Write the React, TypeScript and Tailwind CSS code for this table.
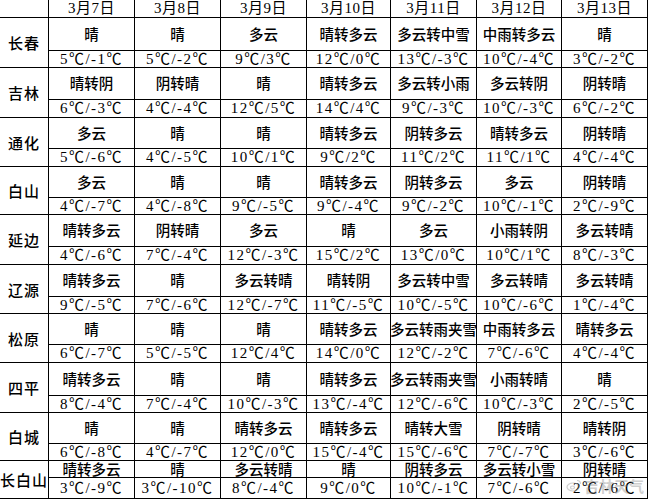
import React from "react"

const dates = ["3月7日", "3月8日", "3月9日", "3月10日", "3月11日", "3月12日", "3月13日"]

const cols = ["w-[49px]", "w-[86px]", "w-[86px]", "w-[86px]", "w-[84px]", "w-[86px]", "w-[85px]", "w-[86px]"]

const cities = [
  {
    name: "长春",
    wh: "h-[33px]",
    th: "h-[16px]",
    weather: ["晴", "晴", "多云", "晴转多云", "多云转中雪", "中雨转多云", "晴"],
    temp: ["5℃/-1℃", "5℃/-2℃", "9℃/3℃", "12℃/0℃", "13℃/-3℃", "10℃/-4℃", "3℃/-2℃"],
  },
  {
    name: "吉林",
    wh: "h-[32px]",
    th: "h-[17px]",
    weather: ["晴转阴", "阴转晴", "晴", "晴转多云", "多云转小雨", "多云转阴", "阴转晴"],
    temp: ["6℃/-3℃", "4℃/-4℃", "12℃/5℃", "14℃/4℃", "9℃/-3℃", "10℃/-3℃", "6℃/-2℃"],
  },
  {
    name: "通化",
    wh: "h-[31px]",
    th: "h-[17px]",
    weather: ["多云", "晴", "晴", "晴转多云", "阴转多云", "晴转多云", "阴转晴"],
    temp: ["5℃/-6℃", "4℃/-5℃", "10℃/1℃", "9℃/2℃", "11℃/2℃", "11℃/1℃", "4℃/-4℃"],
  },
  {
    name: "白山",
    wh: "h-[31px]",
    th: "h-[16px]",
    weather: ["多云", "晴", "晴", "晴转多云", "阴转多云", "多云", "阴转晴"],
    temp: ["4℃/-7℃", "4℃/-8℃", "9℃/-5℃", "9℃/-4℃", "9℃/-2℃", "10℃/-1℃", "2℃/-9℃"],
  },
  {
    name: "延边",
    wh: "h-[32px]",
    th: "h-[17px]",
    weather: ["晴转多云", "阴转晴", "多云", "晴", "多云", "小雨转阴", "多云转晴"],
    temp: ["4℃/-6℃", "7℃/-4℃", "12℃/-3℃", "15℃/2℃", "13℃/0℃", "10℃/1℃", "8℃/-3℃"],
  },
  {
    name: "辽源",
    wh: "h-[32px]",
    th: "h-[16px]",
    weather: ["晴转多云", "晴", "多云转晴", "晴转阴", "多云转中雪", "多云转晴", "多云转晴"],
    temp: ["9℃/-5℃", "7℃/-6℃", "12℃/-7℃", "11℃/-5℃", "10℃/-5℃", "10℃/-6℃", "1℃/-4℃"],
  },
  {
    name: "松原",
    wh: "h-[31px]",
    th: "h-[17px]",
    weather: ["晴", "晴", "晴", "晴转多云", "多云转雨夹雪", "中雨转多云", "晴转多云"],
    temp: ["6℃/-7℃", "5℃/-5℃", "12℃/4℃", "14℃/0℃", "12℃/-2℃", "7℃/-6℃", "4℃/-4℃"],
  },
  {
    name: "四平",
    wh: "h-[33px]",
    th: "h-[16px]",
    weather: ["晴转多云", "晴", "晴", "晴转多云", "多云转雨夹雪", "小雨转晴", "晴"],
    temp: ["8℃/-4℃", "7℃/-4℃", "10℃/-3℃", "13℃/-4℃", "12℃/-6℃", "10℃/-3℃", "2℃/-5℃"],
  },
  {
    name: "白城",
    wh: "h-[31px]",
    th: "h-[16px]",
    weather: ["晴", "晴", "晴转多云", "晴转多云", "晴转大雪", "阴转晴", "晴转阴"],
    temp: ["6℃/-8℃", "4℃/-7℃", "12℃/0℃", "15℃/-4℃", "15℃/-6℃", "7℃/-7℃", "3℃/-6℃"],
  },
  {
    name: "长白山",
    wh: "h-[17px]",
    th: "h-[20px]",
    weather: ["晴转多云", "晴", "多云转晴", "晴", "阴转多云", "多云转小雪", "阴转晴"],
    temp: ["3℃/-9℃", "3℃/-10℃", "8℃/-4℃", "9℃/0℃", "10℃/-1℃", "7℃/-6℃", "2℃/-6℃"],
  },
]

const cjk = "font-['Noto_Sans_CJK_SC',sans-serif]"
const serif = "font-['Liberation_Serif','Noto_Sans_CJK_SC',serif]"

export default function App() {
  return (
    <div className="relative w-[648px] h-[500px] overflow-hidden bg-white text-black">
      {/* header */}
      <div className="flex h-[18px] border-b border-black">
        {cols.map((w, i) => (
          <div
            key={i}
            className={`${w} shrink-0 border-r border-black flex items-center justify-center text-[15px] leading-none tracking-[0.5px] ${serif}`}
          >
            {i > 0 && dates[i - 1]}
          </div>
        ))}
      </div>

      {cities.map((c) => (
        <div key={c.name} className="flex border-b border-black">
          <div
            className={`w-[49px] shrink-0 border-r border-black flex items-center justify-center text-[15px] font-medium leading-none tracking-[1px] whitespace-nowrap ${cjk}`}
          >
            {c.name}
          </div>
          <div className="flex flex-col">
            <div className={`flex ${c.wh} border-b border-black`}>
              {c.weather.map((w, i) => (
                <div
                  key={i}
                  className={`${cols[i + 1]} shrink-0 border-r border-black flex items-center justify-center text-[14.5px] font-medium leading-none whitespace-nowrap ${cjk}`}
                >
                  {w}
                </div>
              ))}
            </div>
            <div className={`flex ${c.th}`}>
              {c.temp.map((t, i) => (
                <div
                  key={i}
                  className={`${cols[i + 1]} shrink-0 border-r border-black flex items-center justify-center text-[15px] leading-none whitespace-nowrap tracking-[1.5px] ${serif}`}
                >
                  {t}
                </div>
              ))}
            </div>
          </div>
        </div>
      ))}

      {/* watermark */}
      <div className="absolute right-[4px] bottom-[3px] flex items-center gap-[2px] opacity-40 text-[#888]">
        <svg width="16" height="13" viewBox="0 0 16 13" fill="none" stroke="#888" strokeWidth="1.2">
          <ellipse cx="7" cy="8" rx="6" ry="4" />
          <ellipse cx="6.5" cy="8.5" rx="2" ry="1.5" />
          <path d="M11 1.5c2 0 3.5 1.5 3.5 3.5" />
        </svg>
        <span className={`text-[15px] font-bold ${cjk}`}>吉林天气</span>
      </div>
    </div>
  )
}
